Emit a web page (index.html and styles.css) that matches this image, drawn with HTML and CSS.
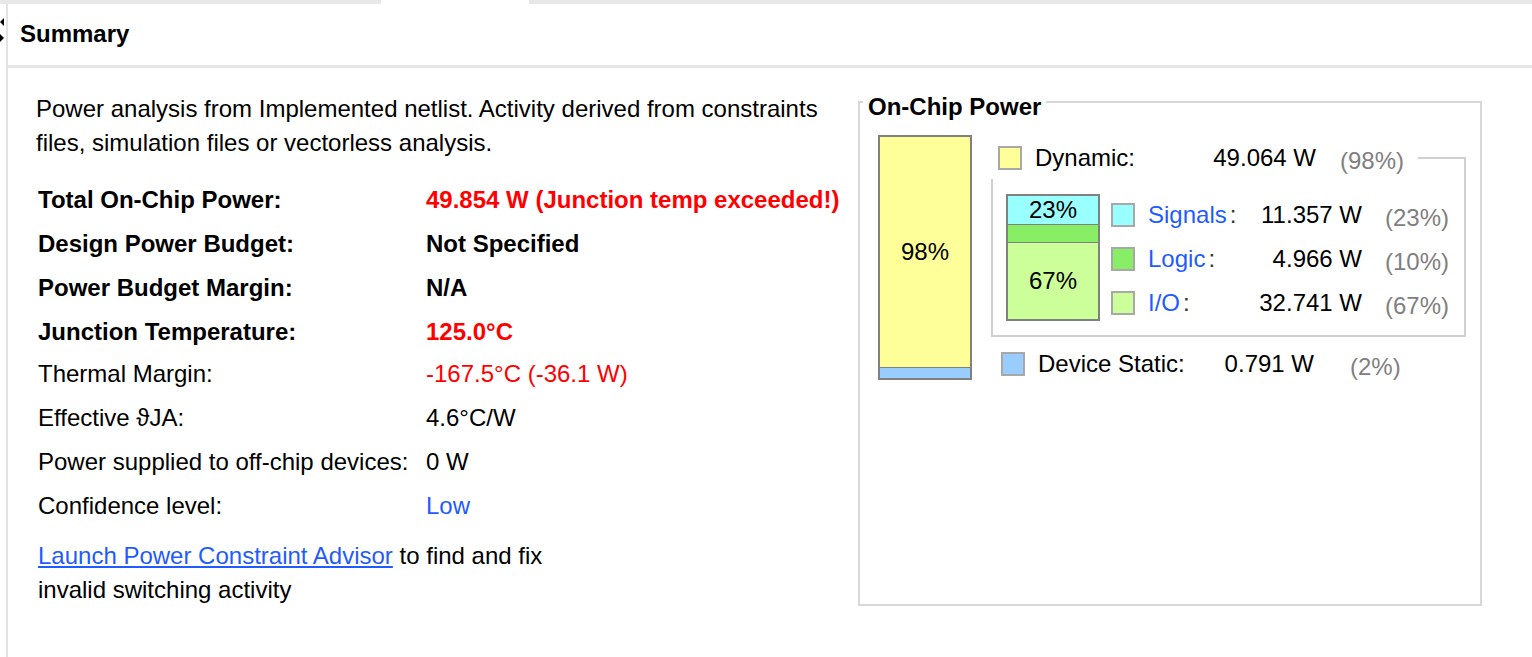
FILE: index.html
```html
<!DOCTYPE html>
<html>
<head>
<meta charset="utf-8">
<link rel="stylesheet" href="styles.css">
</head>
<body>
<div class="tabstrip"><div class="tab-active"></div></div>
<div class="main">
  <svg class="splitter" width="6" height="30" viewBox="0 0 6 30"><path d="M0 5 L4 1 L4 9 Z M0 17 L4 21 L0 25 Z" fill="#000"/></svg>
  <div class="header">Summary</div>
  <div class="content">
    <div class="left">
      <p class="intro">Power analysis from Implemented netlist. Activity derived from constraints files, simulation files or vectorless analysis.</p>
      <table class="stats">
        <tr><td class="lbl b">Total On-Chip Power:</td><td class="val b red">49.854 W (Junction temp exceeded!)</td></tr>
        <tr><td class="lbl b">Design Power Budget:</td><td class="val b">Not Specified</td></tr>
        <tr><td class="lbl b">Power Budget Margin:</td><td class="val b">N/A</td></tr>
        <tr><td class="lbl b">Junction Temperature:</td><td class="val b red">125.0°C</td></tr>
        <tr class="plain"><td class="lbl">Thermal Margin:</td><td class="val red">-167.5°C (-36.1 W)</td></tr>
        <tr class="plain"><td class="lbl">Effective ϑJA:</td><td class="val">4.6°C/W</td></tr>
        <tr class="plain"><td class="lbl">Power supplied to off-chip devices:</td><td class="val">0 W</td></tr>
        <tr class="plain"><td class="lbl">Confidence level:</td><td class="val blue">Low</td></tr>
      </table>
      <p class="advisor"><a class="link" href="#">Launch Power Constraint Advisor</a> to find and fix<br>invalid switching activity</p>
    </div>
    <div class="panel">
      <div class="panel-title">On-Chip Power</div>
      <div class="panel-body">
        <div class="bigbar">
          <div class="seg seg-dyn">98%</div>
          <div class="seg seg-static"></div>
        </div>
        <div class="breakdown">
          <div class="row row-dyn">
            <span class="sq sq-yellow"></span>
            <span class="lv lv-dyn"><span>Dynamic:</span><span>49.064 W</span></span>
            <span class="pct pct-dyn">(98%)</span>
          </div>
          <div class="subbox">
            <div class="smallbar">
              <div class="seg seg-sig">23%</div>
              <div class="seg seg-logic"></div>
              <div class="seg seg-io">67%</div>
            </div>
            <div class="sublist">
              <div class="row subrow">
                <span class="sq sq-cyan"></span>
                <span class="lv lv-sub"><span><span class="blue">Signals</span><span class="colon">:</span></span><span>11.357 W</span></span>
                <span class="pct pct-sub">(23%)</span>
              </div>
              <div class="row subrow">
                <span class="sq sq-green"></span>
                <span class="lv lv-sub"><span><span class="blue">Logic</span><span class="colon">:</span></span><span>4.966 W</span></span>
                <span class="pct pct-sub">(10%)</span>
              </div>
              <div class="row subrow">
                <span class="sq sq-lgreen"></span>
                <span class="lv lv-sub"><span><span class="blue">I/O</span><span class="colon">:</span></span><span>32.741 W</span></span>
                <span class="pct pct-sub">(67%)</span>
              </div>
            </div>
          </div>
          <div class="row row-static">
            <span class="sq sq-blue"></span>
            <span class="lv lv-static"><span>Device Static:</span><span>0.791 W</span></span>
            <span class="pct pct-static">(2%)</span>
          </div>
        </div>
      </div>
    </div>
  </div>
</div>
</body>
</html>
```

FILE: styles.css
```css
* { box-sizing: border-box; }
html, body { margin: 0; padding: 0; background: #fff; }
body {
  font-family: "Liberation Sans", Arial, sans-serif;
  font-size: 24px;
  color: #000;
  width: 1532px;
  height: 657px;
  overflow: hidden;
}
.tabstrip {
  height: 4px;
  background: #e8e8e8;
  display: flex;
}
.tab-active {
  margin-left: 381px;
  width: 148px;
  background: #fff;
}
.main {
  position: relative;
  margin-left: 6px;
  border-left: 2px solid #e2e2e2;
  height: 653px;
}
.splitter {
  position: absolute;
  left: -8px;
  top: 13px;
}
.header {
  height: 64px;
  padding-left: 12px;
  font-weight: bold;
  line-height: 60px;
  border-bottom: 3px solid #e6e6e6;
}
.content {
  display: flex;
  align-items: flex-start;
}
.left {
  width: 850px;
  padding-left: 28px;
  padding-top: 24px;
}
.intro {
  margin: 0;
  width: 800px;
  line-height: 34px;
}
.stats {
  border-collapse: collapse;
  margin-top: 18px;
  margin-left: 2px;
}
.stats td {
  padding: 0;
  height: 44px;
  vertical-align: middle;
  white-space: nowrap;
}
.stats .plain td { padding-bottom: 4px; }
.lbl { width: 388px; }
.b { font-weight: bold; }
.red { color: #ff0000; }
.blue { color: #1f5bff; }
.advisor {
  margin: 9px 0 0 2px;
  line-height: 34px;
}
.link {
  color: #1f5bff;
  text-decoration: underline;
}
.panel {
  width: 624px;
  height: 505px;
  margin-top: 33px;
  border: 2px solid #d8d8d8;
}
.panel-title {
  width: fit-content;
  background: #fff;
  font-weight: bold;
  line-height: 24px;
  margin: -8px 0 0 3px;
  padding: 0 5px;
}
.panel-body {
  display: flex;
  align-items: flex-start;
  padding-left: 18px;
  margin-top: 16px;
}
.bigbar {
  width: 94px;
  height: 245px;
  border: 2px solid #808080;
  display: flex;
  flex-direction: column;
}
.seg {
  display: flex;
  align-items: center;
  justify-content: center;
}
.seg-dyn { flex: 1; background: #ffff99; }
.seg-static { height: 11px; background: #99ccff; border-top: 1px solid #808080; }
.breakdown {
  margin-left: 19px;
  margin-top: 2px;
  width: 475px;
}
.row {
  display: flex;
  align-items: center;
}
.row-dyn {
  position: relative;
  height: 42px;
  padding-left: 7px;
  padding-right: 14px;
  background: #fff;
  width: fit-content;
}
.sq {
  width: 24px;
  height: 24px;
  border: 2px solid #a8a8a8;
  flex: none;
}
.sq-yellow { background: #ffff99; }
.sq-cyan { background: #99ffff; }
.sq-green { background: #88ee66; }
.sq-lgreen { background: #ccff99; }
.sq-blue { background: #99ccff; }
.lv {
  display: flex;
  justify-content: space-between;
  margin-left: 13px;
}
.lv-dyn { width: 281px; }
.lv-sub { width: 214px; }
.lv-static { width: 276px; }
.colon { margin-left: 3px; color: #333; }
.pct { color: #808080; margin-top: 6px; }
.pct-dyn { margin-left: 24px; }
.pct-sub { margin-left: 23px; }
.pct-static { margin-left: 36px; }
.subbox {
  margin-top: -22px;
  height: 180px;
  border: 2px solid #d0d0d0;
  display: flex;
  align-items: flex-start;
  padding-left: 13px;
  padding-top: 35px;
}
.smallbar {
  width: 94px;
  height: 127px;
  border: 2px solid #808080;
  display: flex;
  flex-direction: column;
}
.seg-sig { height: 29px; background: #99ffff; border-bottom: 1px solid #808080; }
.seg-logic { height: 18px; background: #88ee66; border-bottom: 1px solid #808080; }
.seg-io { flex: 1; background: #ccff99; }
.sublist {
  margin-left: 11px;
  margin-top: -1px;
}
.subrow { height: 44px; }
.row-static {
  height: 44px;
  margin-top: 5px;
  padding-left: 10px;
}
```
